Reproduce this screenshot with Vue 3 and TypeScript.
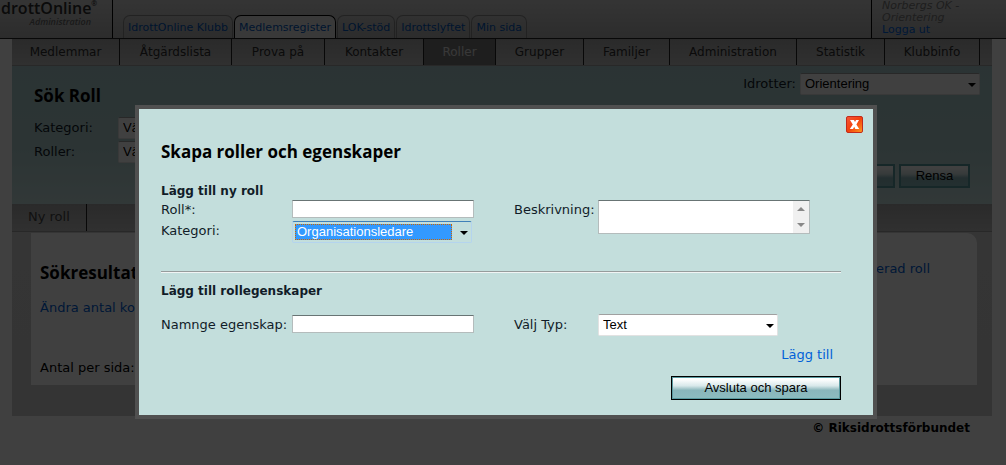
<script setup lang="ts">
import { ref } from 'vue'

interface Tab {
  label: string
  active?: boolean
}

const siteTabs: Tab[] = [
  { label: 'IdrottOnline Klubb' },
  { label: 'Medlemsregister', active: true },
  { label: 'LOK-stöd' },
  { label: 'Idrottslyftet' },
  { label: 'Min sida' },
]

const navItems: Tab[] = [
  { label: 'Medlemmar' },
  { label: 'Åtgärdslista' },
  { label: 'Prova på' },
  { label: 'Kontakter' },
  { label: 'Roller', active: true },
  { label: 'Grupper' },
  { label: 'Familjer' },
  { label: 'Administration' },
  { label: 'Statistik' },
  { label: 'Klubbinfo' },
]

const sport = ref('Orientering')
const filterCategory = ref('Välj')
const filterRole = ref('Välj')
const roleName = ref('')
const category = ref('Organisationsledare')
const description = ref('')
const propertyName = ref('')
const propertyType = ref('Text')
</script>

<template>
  <div class="page">
    <header class="top">
      <div class="logo">
        <div class="logo-name">drottOnline<span class="reg">®</span></div>
        <div class="logo-sub">Administration</div>
      </div>
      <nav class="tabs">
        <a v-for="t in siteTabs" :key="t.label" href="#" class="tab" :class="{ active: t.active }">{{ t.label }}</a>
      </nav>
      <div class="user">
        <em>Norbergs OK -<br />Orientering</em>
        <a href="#">Logga ut</a>
      </div>
    </header>

    <div class="body">
      <nav class="nav">
        <a v-for="n in navItems" :key="n.label" href="#" class="nav-item" :class="{ active: n.active }">{{ n.label }}</a>
      </nav>

      <section class="search">
        <div class="sport">
          <label for="sport">Idrotter:</label>
          <span class="select sport-select">
            <select id="sport" v-model="sport"><option>Orientering</option></select>
            <svg viewBox="0 0 8 4"><path d="M0 0h8L4 4z" /></svg>
          </span>
        </div>
        <h2>Sök Roll</h2>
        <div class="filters">
          <label for="f-cat">Kategori:</label>
          <span class="select"><select id="f-cat" v-model="filterCategory"><option>Välj</option></select></span>
          <label for="f-role">Roller:</label>
          <span class="select"><select id="f-role" v-model="filterRole"><option>Välj</option></select></span>
        </div>
        <div class="search-actions">
          <button type="button" class="btn">Sök</button>
          <button type="button" class="btn">Rensa</button>
        </div>
      </section>

      <div class="toolbar"><a href="#">Ny roll</a></div>

      <section class="results">
        <div class="card">
          <div class="card-head">
            <h2>Sökresultat</h2>
            <a href="#">Exportera selekterad roll</a>
          </div>
          <a href="#">Ändra antal kolumner</a>
          <p>Antal per sida:</p>
        </div>
      </section>
    </div>
    <footer>© Riksidrottsförbundet</footer>
  </div>

  <div class="overlay">
    <form class="dialog" role="dialog" aria-labelledby="dialog-title" @submit.prevent>
      <button type="button" class="close" aria-label="Stäng">
        <svg viewBox="0 0 17 17">
          <defs>
            <linearGradient id="close-fill" x1="0" y1="0" x2="1" y2="1">
              <stop offset="0" stop-color="#f4573a" />
              <stop offset=".5" stop-color="#f4400c" />
              <stop offset="1" stop-color="#ffa020" />
            </linearGradient>
          </defs>
          <rect x=".5" y=".5" width="16" height="16" rx="1.5" fill="url(#close-fill)" stroke="#c22a1c" />
          <path d="M4 4h4l1 2 1-2h3l-2.600 4.500L13.200 13H9.300L8.200 10.800 7 13H3.800l3-4.500z" fill="#fff" />
        </svg>
      </button>
      <h1 id="dialog-title">Skapa roller och egenskaper</h1>

      <h3>Lägg till ny roll</h3>
      <div class="fields role-fields">
        <label for="role">Roll*:</label>
        <input id="role" v-model="roleName" type="text" />
        <label for="desc">Beskrivning:</label>
        <span class="area">
          <textarea id="desc" v-model="description"></textarea>
          <span class="scroll">
            <svg viewBox="0 0 8 4"><path d="M0 4h8L4 0z" /></svg>
            <svg viewBox="0 0 8 4"><path d="M0 0h8L4 4z" /></svg>
          </span>
        </span>
        <label for="cat">Kategori:</label>
        <span class="select focused">
          <select id="cat" v-model="category"><option>Organisationsledare</option></select>
          <svg viewBox="0 0 8 4"><path d="M0 0h8L4 4z" /></svg>
        </span>
      </div>

      <hr />

      <h3>Lägg till rollegenskaper</h3>
      <div class="fields property-fields">
        <label for="prop">Namnge egenskap:</label>
        <input id="prop" v-model="propertyName" type="text" />
        <label for="type">Välj Typ:</label>
        <span class="select">
          <select id="type" v-model="propertyType"><option>Text</option></select>
          <svg viewBox="0 0 8 4"><path d="M0 0h8L4 4z" /></svg>
        </span>
      </div>
      <div class="add"><a href="#">Lägg till</a></div>
      <div class="save"><button type="submit" class="btn primary">Avsluta och spara</button></div>
    </form>
  </div>
</template>

<style>
html,
body {
  margin: 0;
  background: #fff;
}
</style>

<style scoped>
.page,
.overlay {
  font: 13px/16px Verdana, 'DejaVu Sans', sans-serif;
  color: #111c28;
}
.page {
  min-height: 100vh;
  overflow: hidden;
}
a {
  color: #0060d8;
  text-decoration: none;
}
h1,
h2,
h3,
p {
  margin: 0;
}
h1,
h2 {
  font: bold 17px/24px 'Open Sans', sans-serif;
  color: #000;
}
h3 {
  font-size: 12px;
  line-height: 16px;
}

/* Top bar */
.top {
  display: flex;
  height: 38px;
  border-bottom: 1px solid #222;
  background: linear-gradient(#d0d0d0, #b0b0b0);
}
.logo {
  box-sizing: border-box;
  width: 113px;
  padding-left: 1px;
  border-right: 1px solid #000;
  color: #2c2c2c;
}
.logo-name {
  display: flex;
  font: 600 16px/16px 'Open Sans', sans-serif;
  white-space: nowrap;
}
.reg {
  font-size: 7px;
  line-height: 7px;
}
.logo-sub {
  padding: 0 21px 0 0;
  text-align: right;
  font: italic 600 9px/11px 'Open Sans', sans-serif;
  color: #666;
}
.tabs {
  flex: 1;
  display: flex;
  align-items: flex-end;
  gap: 1px;
  padding-left: 10px;
}
.tab {
  box-sizing: border-box;
  height: 23px;
  padding: 0 4px;
  border: 1px solid #888;
  border-bottom: 0;
  border-radius: 7px 7px 0 0;
  font-size: 11px;
  line-height: 23px;
  color: #0054b8;
}
.tab.active {
  background: #e4e4e4;
  border-color: #000;
}
.user {
  box-sizing: border-box;
  width: 135px;
  border-left: 1px solid #000;
  padding-left: 10px;
  font-size: 11px;
  line-height: 12px;
  color: #777;
}
.user a {
  display: block;
}

/* Main column */
.body {
  margin: 0 14px 0 12px;
  background: linear-gradient(#d4d4d4, #cfcfcf);
}
.nav {
  display: grid;
  grid-template-columns: 108fr 112fr 93fr 99fr 72fr 88fr 86fr 127fr 88fr 95fr 12fr;
  height: 26px;
  background: linear-gradient(#a8a8a8, #c0c0c0);
  border-bottom: 1px solid #a0a0a0;
}
.nav-item {
  border-right: 1px solid #222;
  text-align: center;
  font-size: 12px;
  line-height: 26px;
  color: #2c2c2c;
}
.nav-item.active {
  background: #787878;
  color: #e0e0e0;
}
.search {
  position: relative;
  box-sizing: border-box;
  height: 138px;
  padding: 18px 22px 0;
  background: linear-gradient(#aaccd0, #b0d0d0 60%, #c4dedd);
}
.sport {
  position: absolute;
  top: 7px;
  right: 12px;
  display: flex;
  align-items: center;
  gap: 4px;
}
.filters {
  display: grid;
  grid-template-columns: 84px 180px;
  row-gap: 2px;
  margin-top: 9px;
}
.filters label {
  line-height: 22px;
}
.search-actions {
  position: absolute;
  right: 22px;
  bottom: 16px;
  display: flex;
  gap: 4px;
}
.toolbar {
  display: flex;
  height: 27px;
  background: linear-gradient(#a8a8a8, #c0c0c0);
  border-bottom: 1px solid #a0a0a0;
}
.toolbar a {
  padding: 0 16px;
  border-right: 1px solid #222;
  line-height: 26px;
  color: #444;
}
.results {
  padding: 1px 15px 31px 19px;
}
.card {
  box-sizing: border-box;
  height: 152px;
  padding: 28px 9px 0;
  background: #fff;
  border-top-right-radius: 10px;
}
.card-head {
  display: flex;
  justify-content: space-between;
  padding-right: 38px;
  margin-bottom: 15px;
}
.card p {
  margin-top: 44px;
  color: #000;
}
footer {
  padding: 4px 36px 0 0;
  text-align: right;
  font-size: 12px;
  font-weight: bold;
  color: #000;
}

/* Controls */
.select {
  position: relative;
  display: block;
}
.select select {
  appearance: none;
  display: block;
  box-sizing: border-box;
  width: 100%;
  height: 22px;
  margin: 0;
  padding: 2px 20px 2px 4px;
  border: 1px solid #e2e2e2;
  border-top-color: #a0a0a0;
  border-radius: 2px;
  outline: 0;
  background: #fff;
  font: 13px/16px 'Liberation Sans', Arial, sans-serif;
  color: #000;
}
.select svg {
  position: absolute;
  top: 10px;
  right: 4px;
  width: 8px;
  height: 4px;
  pointer-events: none;
}
.sport-select {
  width: 180px;
}
.btn {
  box-sizing: border-box;
  height: 24px;
  min-width: 71px;
  padding: 0;
  border: 2px solid #5a9aa0;
  background: linear-gradient(#fff 10%, #d8e8ea 40%, #8ab6bb 60%, #8cbcc0);
  font: 13px/16px 'Liberation Sans', Arial, sans-serif;
  color: #000;
}

/* Dialog */
.overlay {
  position: fixed;
  inset: 0;
  box-sizing: border-box;
  padding: 105px 0 0 6px;
  background: rgba(0, 0, 0, 0.75);
}
.dialog {
  position: relative;
  box-sizing: border-box;
  width: 742px;
  max-width: 100%;
  margin: 0 auto;
  padding: 31px 32px 15px 22px;
  border: 4px solid #505050;
  background: #c3dedc;
}
.close {
  position: absolute;
  top: 7px;
  right: 10px;
  width: 17px;
  height: 17px;
  padding: 0;
  border: 0;
  background: none;
}
.close svg {
  display: block;
}
.dialog h1 {
  margin-bottom: 19px;
}
.fields {
  display: grid;
  grid-template-columns: 131px 222px 84px 1fr;
}
.role-fields {
  margin-top: 1px;
  grid-template-rows: 21px 22px;
}
.role-fields label {
  line-height: 20px;
}
.fields input {
  box-sizing: border-box;
  width: 182px;
  height: 18px;
  margin: 0;
  padding: 1px 3px;
  border: 1px solid #b4bcbc;
  border-top-color: #687474;
  background: #fff;
  font: 13px/14px 'Liberation Sans', Arial, sans-serif;
}
.area {
  grid-column: 4;
  grid-row: 1 / 3;
  box-sizing: border-box;
  display: flex;
  width: 212px;
  height: 34px;
  border: 1px solid #b4bcbc;
  border-top-color: #687474;
  background: #fff;
}
.area textarea {
  flex: 1;
  min-width: 0;
  padding: 1px 3px;
  border: 0;
  outline: 0;
  resize: none;
  overflow: hidden;
  background: none;
}
.scroll {
  width: 16px;
  display: flex;
  flex-direction: column;
  align-items: center;
  justify-content: space-around;
  background: #f0f0f0;
}
.scroll svg {
  width: 8px;
  height: 4px;
  fill: #888;
}
.focused {
  width: 180px;
}
.focused select {
  padding: 2px 19px 2px 2px;
  border-color: #b4d4ee;
  border-top-color: #4080b8;
  background: linear-gradient(#3399ff, #3399ff) content-box no-repeat #fff;
  color: #fff;
  text-indent: 2px;
}
.focused::after {
  content: '';
  position: absolute;
  inset: 3px 20px 3px 3px;
  border: 1px dotted #cc6600;
  pointer-events: none;
}
hr {
  height: 0;
  margin: 28px 0 10px;
  border: 0;
  border-top: 1px solid #969c9c;
  border-bottom: 1px solid #f0f4f4;
}
.property-fields {
  margin-top: 15px;
}
.property-fields label {
  line-height: 21px;
}
.property-fields input {
  margin-top: 1px;
}
.property-fields .select {
  width: 180px;
}
.add {
  margin-top: 11px;
  padding-right: 8px;
  text-align: right;
}
.save {
  margin-top: 13px;
  text-align: right;
}
.primary {
  width: 170px;
  border: 1px solid #000;
  box-shadow: inset 0 0 0 1px #5a9aa0;
}
.save .primary {
  display: inline-block;
  vertical-align: top;
}
</style>
